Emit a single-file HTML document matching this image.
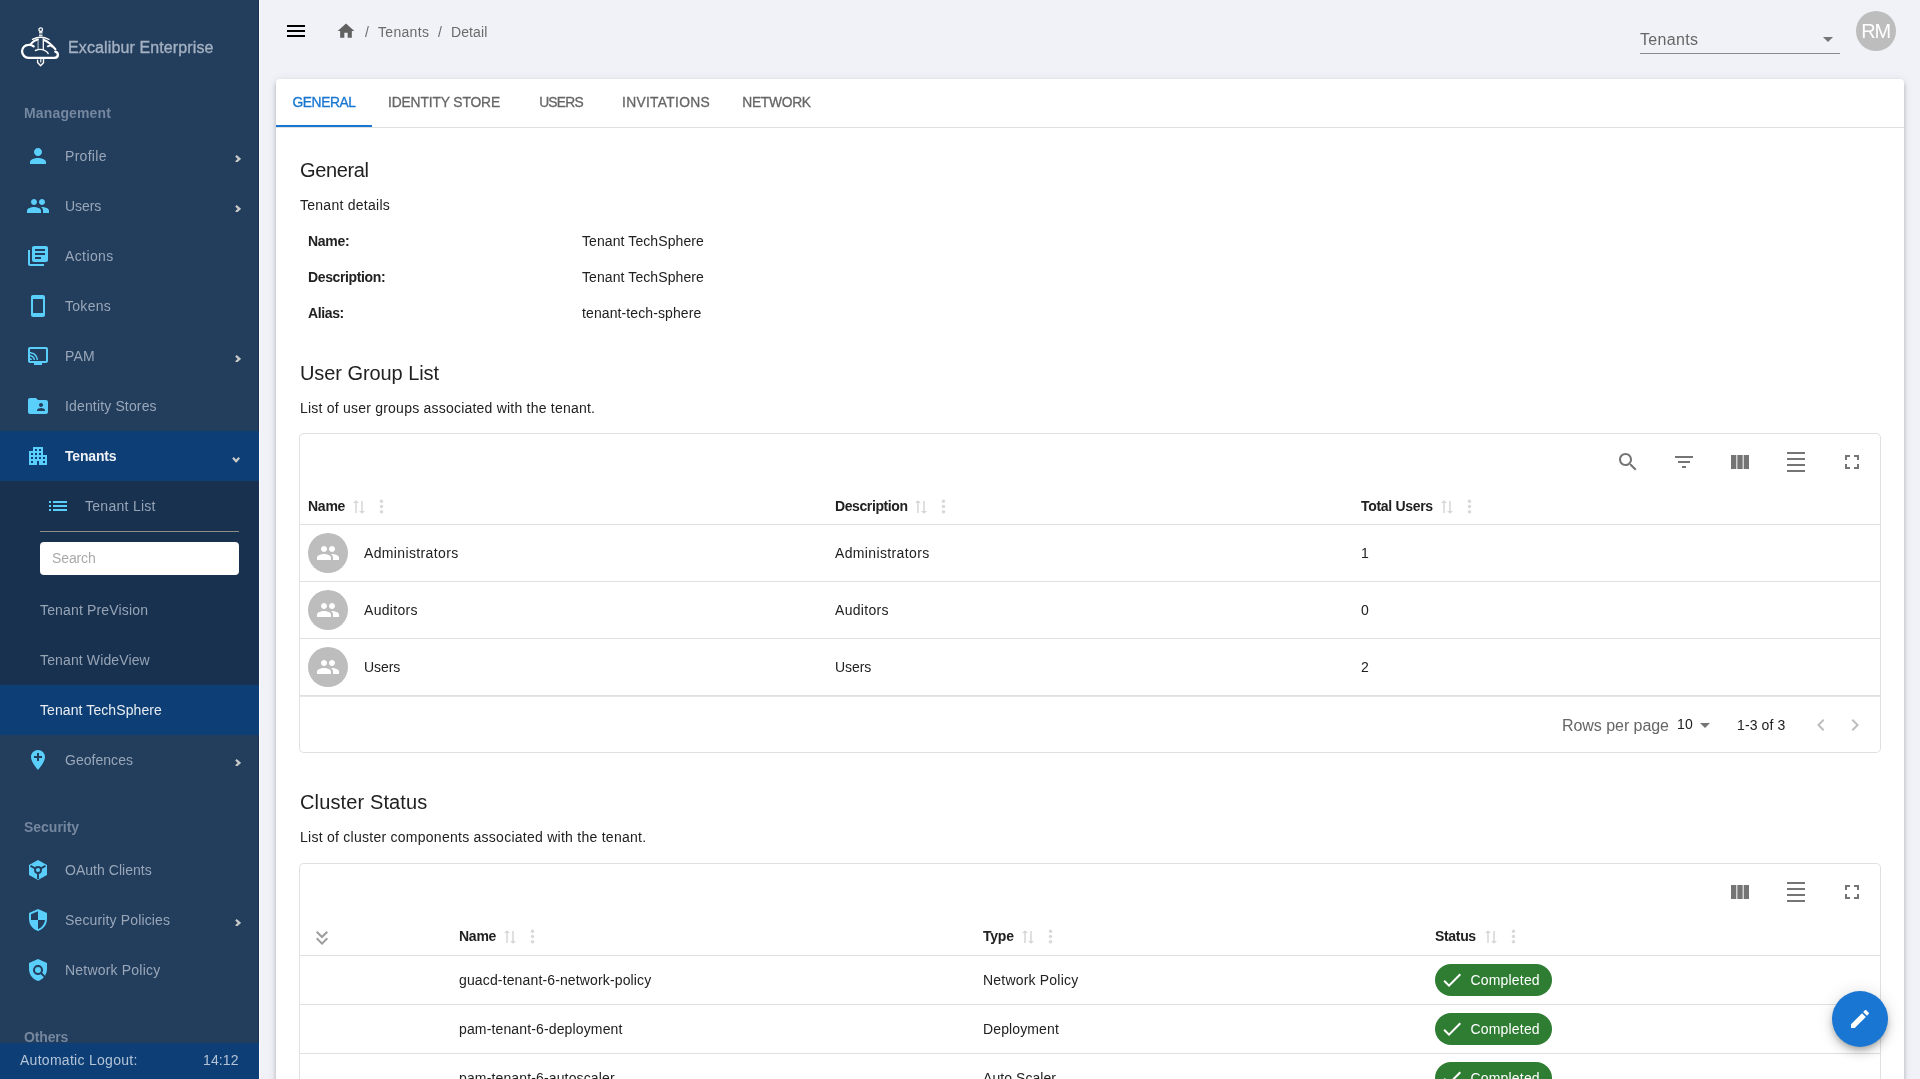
<!DOCTYPE html>
<html lang="en"><head>
<meta charset="utf-8">
<title>Excalibur Enterprise - Tenant Detail</title>
<style>
*{box-sizing:border-box;margin:0;padding:0}
html,body{width:1920px;height:1079px;overflow:hidden;background:#f1f2f7}
body{font-family:"Liberation Sans",sans-serif;font-size:14px;color:#212121;position:relative;will-change:transform}
.t{white-space:pre;display:inline-block}
svg{display:block;flex:none}
/* ---------- sidebar ---------- */
#side{position:absolute;left:0;top:0;width:259px;height:1079px;background:#233d5c;overflow:hidden;box-shadow:inset -1px 0 0 #1a3252,1px 0 0 rgba(255,255,255,.85)}
.brand{position:absolute;left:0;top:0;height:94px;width:259px}
.brand svg{position:absolute;left:20px;top:26px}
.brand .t{position:absolute;left:68px;top:36px;-webkit-text-stroke:.35px;font-size:16px;line-height:24px;font-weight:500;color:#a3b1c2;letter-spacing:.15px}
.sect{position:absolute;left:24px;height:20px;line-height:20px;font-size:14px;font-weight:700;color:#74879f;letter-spacing:.45px}
.mi{position:absolute;left:0;width:259px;height:50px;display:flex;align-items:center;color:#99a7b9}
.mi .ic{position:absolute;left:26px;top:13px;width:24px;height:24px;fill:#5acffb}
.mi .t{position:absolute;left:65px;top:15px;font-size:14px;line-height:20px;letter-spacing:.15px}
.mi .ch{position:absolute;left:234.6px;top:23.5px;width:6.2px;height:7.8px;fill:#c9c9c9}
.mi .ch.dn{left:232.9px;top:25.2px;transform:rotate(90deg)}
.mi.act{background:#0d3f76;color:#eef1f5}
.mi.act .t{font-weight:700}
#sub{position:absolute;left:0;top:481px;width:259px;height:254px;background:#18314f}
.si{position:absolute;left:0;width:259px;height:50px;color:#96a4b6}
.si .t{position:absolute;left:40px;top:15px;font-size:14px;line-height:20px;letter-spacing:.15px}
.si.act{background:#0d3f76;color:#e9edf2}
#foot{position:absolute;left:0;top:1043px;width:259px;height:36px;background:#0d3f76;color:#b4c3d6}
#foot .t{position:absolute;top:7px;font-size:14px;line-height:20px;letter-spacing:.15px}
/* ---------- top bar ---------- */
#burger{position:absolute;left:284px;top:19px;width:24px;height:24px;fill:#000}
#home{position:absolute;left:336px;top:21px;width:20px;height:20px;fill:#616161}
.bc{position:absolute;top:22px;font-size:14px;line-height:20px;color:#6b6b6b;letter-spacing:.15px}
#sel{position:absolute;left:1640px;top:24px;width:200px;height:30px;border-bottom:1px solid #8a8a8a}
#sel .t{position:absolute;left:0;top:4px;font-size:16px;line-height:24px;color:#666;letter-spacing:.15px}
#sel svg{position:absolute;left:176px;top:3px;width:24px;height:24px;fill:#757575}
#ava{position:absolute;left:1855.5px;top:11px;width:40px;height:40px;border-radius:50%;background:#bdbdbd;color:#fff;text-align:center}
#ava .t{font-size:20px;line-height:40px;letter-spacing:0}
/* ---------- card ---------- */
#card{position:absolute;left:276px;top:79px;width:1628px;height:1100px;background:#fff;border-radius:4px;box-shadow:0 2px 4px -1px rgba(0,0,0,.17),0 4px 5px 0 rgba(0,0,0,.12),0 1px 10px 0 rgba(0,0,0,.1)}
#tabs{position:absolute;left:0;top:0;width:1628px;height:49px;border-bottom:1px solid #e0e0e0}
.tab{position:absolute;top:0;height:48px;text-align:center;color:#666;font-weight:500}
.tab .t{font-size:14px;line-height:48px;letter-spacing:.4px;-webkit-text-stroke:.3px}
.tab.on{color:#1976d2;border-bottom:2px solid #1976d2}
.h6{position:absolute;left:24px;font-size:20px;line-height:32px;height:32px;letter-spacing:.15px;color:#212121}
.p{position:absolute;left:24px;font-size:14px;line-height:20px;height:20px;letter-spacing:.15px;color:#212121}
.kv{position:absolute;font-size:14px;line-height:20px;letter-spacing:.15px}
.kv.k{left:32px;font-weight:700}
.kv.v{left:306px}
/* ---------- tables ---------- */
.box{position:absolute;left:24px;width:1580px;background:#fff;border-radius:4px;box-shadow:0 0 0 1px #e0e0e0;overflow:hidden}
.tb{position:absolute;top:16px;width:24px;height:24px;fill:#757575}
.hl{position:absolute;left:0;width:1580px;height:1px;background:#e0e0e0}
.th{position:absolute;font-size:14px;line-height:20px;font-weight:700;letter-spacing:.1px;color:#212121}
.so{position:absolute;width:18px;height:18px;fill:#d6d6d6}
.mv{position:absolute;width:21px;height:21px;fill:#d9d9d9}
.td{position:absolute;font-size:14px;line-height:20px;letter-spacing:.15px;color:#212121}
.gav{position:absolute;left:8px;width:40px;height:40px;border-radius:50%;background:#bdbdbd}
.gav svg{position:absolute;left:8px;top:8px;width:24px;height:24px;fill:#fff}
.pg{position:absolute;font-size:14px;line-height:20px;letter-spacing:.15px;color:#212121}
.chip{position:absolute;left:1135px;width:117px;height:32px;border-radius:16px;background:#2e7d32;color:#fff}
.chip svg{position:absolute;left:5px;top:4px;width:24px;height:24px;fill:#fff}
.chip .t{position:absolute;left:35.5px;top:6px;font-size:14px;line-height:20px;letter-spacing:.15px}
#fab{position:absolute;left:1832px;top:991px;width:56px;height:56px;border-radius:50%;background:#1976d2;box-shadow:0 3px 5px -1px rgba(0,0,0,.2),0 6px 10px 0 rgba(0,0,0,.14),0 1px 18px 0 rgba(0,0,0,.12)}
#fab svg{position:absolute;left:16px;top:16px;width:24px;height:24px;fill:#fff}
.tab .t{font-size:13.8px}
</style>
</head>
<body>
<div id="side">
<div class="brand"><svg width="40" height="42" viewBox="0 0 40 42" fill="none" stroke="#fff" stroke-linecap="round" stroke-linejoin="round">
<circle cx="20.7" cy="3.7" r="1.8" stroke-width="1.3"></circle>
<path d="M19 6.4h3.5M19 8h3.5M19 9.6h3.5" stroke-width="1.1" stroke-linecap="butt" opacity=".85"></path>
<path d="M12.5 13.4Q20.7 9.1 29.1 13.5" stroke-width="1.35"></path>
<path d="M18.1 13v10.2" stroke-width="1.1" stroke="#b9c3cf"></path>
<path d="M23.3 13v10.4" stroke-width="1.3"></path>
<path d="M13.6 20.4C11.9 19 10 18.7 8.5 18.9A6.45 6.45 0 0 0 8.5 31.8L34.6 31.8A3.3 3.3 0 0 0 37.9 28.6C37.9 27.2 36.7 26 35.3 25.6" stroke-width="2.3"></path>
<path d="M10.9 17.8C12.6 15.6 15 14.1 17.7 13.5" stroke-width="2"></path>
<path d="M24 14.1C28 15.6 32 19.4 35.4 23.2" stroke-width="2.1"></path><path d="M27.8 20.3L30.6 19.4L32 20.6" stroke-width="1.9"></path>
<path d="M15.4 24.5Q20.2 22.4 24 24.2T28.2 27.5" stroke-width="1.4"></path>
<path d="M17.6 34.2V36.6L20.6 39.7L23.5 36.8V32.5" stroke-width="1.4"></path>
<path d="M20.8 32.6V36" stroke-width="1.1"></path>
</svg><span class="t" style="letter-spacing: 0.12px;">Excalibur Enterprise</span></div>
<span class="t sect" style="top: 103px; letter-spacing: 0.15px;">Management</span>
<div class="mi" style="top:131px"><svg class="ic" viewBox="0 0 24 24"><path d="M12 12c2.21 0 4-1.79 4-4s-1.79-4-4-4-4 1.79-4 4 1.79 4 4 4zm0 2c-2.67 0-8 1.34-8 4v2h16v-2c0-2.66-5.33-4-8-4z"></path></svg><span class="t" style="letter-spacing: 0.29px;">Profile</span><svg class="ch" viewBox="0 0 6.2 7.8"><path d="M0.2 1.5L1.7 0 6.1 3.9 1.7 7.8 0.2 6.3 2.6 3.9z"></path></svg></div>
<div class="mi" style="top:181px"><svg class="ic" viewBox="0 0 24 24"><path d="M16 11c1.66 0 2.99-1.34 2.99-3S17.66 5 16 5c-1.66 0-3 1.34-3 3s1.34 3 3 3zm-8 0c1.66 0 2.99-1.34 2.99-3S9.66 5 8 5C6.34 5 5 6.34 5 8s1.34 3 3 3zm0 2c-2.33 0-7 1.17-7 3.5V19h14v-2.5c0-2.33-4.67-3.5-7-3.5zm8 0c-.29 0-.62.02-.97.05 1.16.84 1.97 1.97 1.97 3.45V19h6v-2.5c0-2.33-4.67-3.5-7-3.5z"></path></svg><span class="t" style="letter-spacing: -0.06px;">Users</span><svg class="ch" viewBox="0 0 6.2 7.8"><path d="M0.2 1.5L1.7 0 6.1 3.9 1.7 7.8 0.2 6.3 2.6 3.9z"></path></svg></div>
<div class="mi" style="top:231px"><svg class="ic" viewBox="0 0 24 24"><path d="M4 6H2v14c0 1.1.9 2 2 2h14v-2H4V6zm16-4H8c-1.1 0-2 .9-2 2v12c0 1.1.9 2 2 2h12c1.1 0 2-.9 2-2V4c0-1.1-.9-2-2-2zm-1 9H9V9h10v2zm-4 4H9v-2h6v2zm4-8H9V5h10v2z"></path></svg><span class="t" style="letter-spacing: 0.39px;">Actions</span></div>
<div class="mi" style="top:281px"><svg class="ic" viewBox="0 0 24 24"><path d="M17 1.01L7 1c-1.1 0-1.99.9-1.99 2v18c0 1.1.89 2 1.99 2h10c1.1 0 2-.9 2-2V3c0-1.1-.9-1.99-2-1.99zM17 19H7V5h10v14z"></path></svg><span class="t" style="letter-spacing: 0.28px;">Tokens</span></div>
<div class="mi" style="top:331px"><svg class="ic" viewBox="0 0 24 24"><path d="M20 3H4c-1.1 0-2 .9-2 2v12c0 1.1.9 2 2 2h4v2h8v-2h4c1.1 0 1.99-.9 1.99-2L22 5c0-1.1-.9-2-2-2zm0 14H4V5h16v12zM4 14v2h2c0-1.11-.89-2-2-2zm0-3v1.43c1.97 0 3.57 1.6 3.57 3.57H9c0-2.76-2.24-5-5-5zm0-3v1.45c3.61 0 6.55 2.93 6.55 6.55H12c0-4.42-3.59-8-8-8z"></path></svg><span class="t" style="letter-spacing: 0.12px;">PAM</span><svg class="ch" viewBox="0 0 6.2 7.8"><path d="M0.2 1.5L1.7 0 6.1 3.9 1.7 7.8 0.2 6.3 2.6 3.9z"></path></svg></div>
<div class="mi" style="top:381px"><svg class="ic" viewBox="0 0 24 24"><path d="M20 6h-8l-2-2H4c-1.1 0-1.99.9-1.99 2L2 18c0 1.1.9 2 2 2h16c1.1 0 2-.9 2-2V8c0-1.1-.9-2-2-2zm-5 3c1.1 0 2 .9 2 2s-.9 2-2 2-2-.9-2-2 .9-2 2-2zm4 8h-8v-1c0-1.33 2.67-2 4-2s4 .67 4 2v1z"></path></svg><span class="t" style="letter-spacing: 0.15px;">Identity Stores</span></div>
<div class="mi act" style="top:431px"><svg class="ic" viewBox="0 0 24 24"><path d="M17 11V3H7v4H3v14h8v-4h2v4h8V11h-4zM7 19H5v-2h2v2zm0-4H5v-2h2v2zm0-4H5V9h2v2zm4 4H9v-2h2v2zm0-4H9V9h2v2zm0-4H9V5h2v2zm4 8h-2v-2h2v2zm0-4h-2V9h2v2zm0-4h-2V5h2v2zm4 12h-2v-2h2v2zm0-4h-2v-2h2v2z"></path></svg><span class="t" style="letter-spacing: -0.17px;">Tenants</span><svg class="ch dn" viewBox="0 0 6.2 7.8"><path d="M0.2 1.5L1.7 0 6.1 3.9 1.7 7.8 0.2 6.3 2.6 3.9z"></path></svg></div>
<div id="sub">
<div class="si" style="top:0"><svg style="position:absolute;left:46px;top:13px;width:24px;height:24px;fill:#5acffb" viewBox="0 0 24 24"><path d="M3 13h2v-2H3v2zm0 4h2v-2H3v2zm0-8h2V7H3v2zm4 4h14v-2H7v2zm0 4h14v-2H7v2zM7 7v2h14V7H7z"></path></svg><span class="t" style="left: 85px; letter-spacing: 0.28px;">Tenant List</span></div>
<div style="position:absolute;left:40px;top:50px;width:199px;height:1px;background:#8f8c89"></div>
<div style="position:absolute;left:40px;top:61px;width:199px;height:33px;background:#fff;border-radius:4px"><span class="t" style="position: absolute; left: 12px; top: 6px; font-size: 14px; line-height: 20px; color: rgb(169, 169, 169); letter-spacing: -0.12px;">Search</span></div>
<div class="si" style="top:104px"><span class="t" style="letter-spacing: 0.16px;">Tenant PreVision</span></div>
<div class="si" style="top:154px"><span class="t" style="letter-spacing: 0.13px;">Tenant WideView</span></div>
<div class="si act" style="top:204px"><span class="t" style="letter-spacing: 0.09px;">Tenant TechSphere</span></div>
</div>
<div class="mi" style="top:735px"><svg class="ic" viewBox="0 0 24 24"><path d="M12 2C8.14 2 5 5.14 5 9c0 5.25 7 13 7 13s7-7.75 7-13c0-3.86-3.14-7-7-7zm4 8h-3v3h-2v-3H8V8h3V5h2v3h3v2z"></path></svg><span class="t" style="letter-spacing: 0.03px;">Geofences</span><svg class="ch" viewBox="0 0 6.2 7.8"><path d="M0.2 1.5L1.7 0 6.1 3.9 1.7 7.8 0.2 6.3 2.6 3.9z"></path></svg></div>
<span class="t sect" style="top: 817px; letter-spacing: -0.02px;">Security</span>
<div class="mi" style="top:845px"><svg class="ic" viewBox="0 0 24 24"><path d="M12 2L3 7v10l9 5 9-5V7z"></path><g stroke="#233d5c" stroke-width="1.9" fill="none"><path d="M12 12L4.5 7.8M12 12l7.5-4.2M12 12v9"></path></g><circle cx="12" cy="12" r="3" fill="#5acffb" stroke="#233d5c" stroke-width="1.9"></circle></svg><span class="t" style="letter-spacing: 0.03px;">OAuth Clients</span></div>
<div class="mi" style="top:895px"><svg class="ic" viewBox="0 0 24 24"><path d="M12 1L3 5v6c0 5.55 3.84 10.74 9 12 5.16-1.26 9-6.45 9-12V5l-9-4zm0 10.99h7c-.53 4.12-3.28 7.79-7 8.94V12H5V6.3l7-3.11v8.8z"></path></svg><span class="t" style="letter-spacing: 0.14px;">Security Policies</span><svg class="ch" viewBox="0 0 6.2 7.8"><path d="M0.2 1.5L1.7 0 6.1 3.9 1.7 7.8 0.2 6.3 2.6 3.9z"></path></svg></div>
<div class="mi" style="top:945px"><svg class="ic" viewBox="0 0 24 24"><path d="M21 5l-9-4-9 4v6c0 5.55 3.84 10.74 9 12 2.3-.56 4.33-1.9 5.88-3.71l-3.12-3.12c-1.94 1.29-4.58 1.07-6.29-.64-1.95-1.95-1.95-5.12 0-7.07 1.95-1.95 5.12-1.95 7.07 0 1.71 1.71 1.92 4.35.64 6.29l2.9 2.9C20.29 15.69 21 13.38 21 11V5z"></path><circle cx="12" cy="12" r="3"></circle></svg><span class="t" style="letter-spacing: 0.2px;">Network Policy</span></div>
<span class="t sect" style="top: 1027px; letter-spacing: -0.15px;">Others</span>
<div id="foot"><span class="t" style="left: 20px; letter-spacing: 0.28px;">Automatic Logout:</span><span class="t" style="left: 203px; letter-spacing: 0.11px;">14:12</span></div>
</div>
<svg id="burger" viewBox="0 0 24 24"><path d="M3 18h18v-2H3v2zm0-5h18v-2H3v2zm0-7v2h18V6H3z"></path></svg><svg id="home" viewBox="0 0 24 24"><path d="M10 20v-6h4v6h5v-8h3L12 3 2 12h3v8z"></path></svg><span class="t bc" style="left:365px">/</span><span class="t bc" style="left: 378px; letter-spacing: 0.31px;">Tenants</span><span class="t bc" style="left:438px">/</span><span class="t bc" style="left: 451px; letter-spacing: 0.11px;">Detail</span>
<div id="sel"><span class="t" style="letter-spacing: 0.33px;">Tenants</span><svg viewBox="0 0 24 24"><path d="M7 10l5 5 5-5z"></path></svg></div>
<div id="ava"><span class="t" style="letter-spacing: -1.31px;">RM</span></div>
<div id="card">
<div id="tabs"><div class="tab on" style="left:0px;width:96px"><span class="t" style="letter-spacing: -0.43px;">GENERAL</span></div><div class="tab" style="left:96px;width:144px"><span class="t" style="letter-spacing: -0.12px;">IDENTITY STORE</span></div><div class="tab" style="left:240px;width:90px"><span class="t" style="letter-spacing: -0.78px;">USERS</span></div><div class="tab" style="left:330px;width:120px"><span class="t" style="letter-spacing: 0.3px;">INVITATIONS</span></div><div class="tab" style="left:450px;width:101px"><span class="t" style="letter-spacing: -0.31px;">NETWORK</span></div></div>
<span class="t h6" style="top: 75px; letter-spacing: -0.37px;">General</span>
<span class="t p" style="top: 116px; letter-spacing: 0.26px;">Tenant details</span>
<span class="t kv k" style="top: 152px; letter-spacing: -0.3px;">Name:</span><span class="t kv v" style="top: 152px; letter-spacing: 0.09px;">Tenant TechSphere</span>
<span class="t kv k" style="top: 188px; letter-spacing: -0.37px;">Description:</span><span class="t kv v" style="top: 188px; letter-spacing: 0.09px;">Tenant TechSphere</span>
<span class="t kv k" style="top: 224px; letter-spacing: -0.38px;">Alias:</span><span class="t kv v" style="top: 224px; letter-spacing: 0.1px;">tenant-tech-sphere</span>
<span class="t h6" style="top: 278px; letter-spacing: -0.07px;">User Group List</span>
<span class="t p" style="top: 319px; letter-spacing: 0.22px;">List of user groups associated with the tenant.</span>
<div class="box" style="top:355px;height:318px">
<svg class="tb" style="left:1316px" viewBox="0 0 24 24"><path d="M15.5 14h-.79l-.28-.27C15.41 12.59 16 11.11 16 9.5 16 5.91 13.09 3 9.5 3S3 5.91 3 9.5 5.91 16 9.5 16c1.61 0 3.09-.59 4.23-1.57l.27.28v.79l5 4.99L20.49 19l-4.99-5zm-6 0C7.01 14 5 11.99 5 9.5S7.01 5 9.5 5 14 7.01 14 9.5 11.99 14 9.5 14z"></path></svg><svg class="tb" style="left:1372px" viewBox="0 0 24 24"><path d="M10 18h4v-2h-4v2zM3 6v2h18V6H3zm3 7h12v-2H6v2z"></path></svg><svg class="tb" style="left:1428px" viewBox="0 0 24 24"><path d="M14.67 5v14H9.33V5h5.34zm1 14H21V5h-5.33v14zm-7.34 0V5H3v14h5.33z"></path></svg><svg class="tb" style="left:1484px" viewBox="0 0 24 24"><path d="M3 2h18v2H3zm0 18h18v2H3zm0-6h18v2H3zm0-6h18v2H3z"></path></svg><svg class="tb" style="left:1540px" viewBox="0 0 24 24"><path d="M7 14H5v5h5v-2H7v-3zm-2-4h2V7h3V5H5v5zm12 7h-3v2h5v-5h-2v3zM14 5v2h3v3h2V5h-5z"></path></svg>
<span class="t th" style="left: 8px; top: 62px; letter-spacing: -0.26px;">Name</span><svg class="so" style="left:50px;top:64px;transform:rotate(-90deg) scaleX(.9)" viewBox="0 0 24 24"><path d="M18 12l4-4-4-4v3H3v2h15zM6 12l-4 4 4 4v-3h15v-2H6z"></path></svg><svg class="mv" style="left:71px;top:62.4px" viewBox="0 0 24 24"><path d="M12 8c1.1 0 2-.9 2-2s-.9-2-2-2-2 .9-2 2 .9 2 2 2zm0 2c-1.1 0-2 .9-2 2s.9 2 2 2 2-.9 2-2-.9-2-2-2zm0 6c-1.1 0-2 .9-2 2s.9 2 2 2 2-.9 2-2-.9-2-2-2z"></path></svg>
<span class="t th" style="left: 535px; top: 62px; letter-spacing: -0.4px;">Description</span><svg class="so" style="left:612px;top:64px;transform:rotate(-90deg) scaleX(.9)" viewBox="0 0 24 24"><path d="M18 12l4-4-4-4v3H3v2h15zM6 12l-4 4 4 4v-3h15v-2H6z"></path></svg><svg class="mv" style="left:633px;top:62.4px" viewBox="0 0 24 24"><path d="M12 8c1.1 0 2-.9 2-2s-.9-2-2-2-2 .9-2 2 .9 2 2 2zm0 2c-1.1 0-2 .9-2 2s.9 2 2 2 2-.9 2-2-.9-2-2-2zm0 6c-1.1 0-2 .9-2 2s.9 2 2 2 2-.9 2-2-.9-2-2-2z"></path></svg>
<span class="t th" style="left: 1061px; top: 62px; letter-spacing: -0.31px;">Total Users</span><svg class="so" style="left:1138px;top:64px;transform:rotate(-90deg) scaleX(.9)" viewBox="0 0 24 24"><path d="M18 12l4-4-4-4v3H3v2h15zM6 12l-4 4 4 4v-3h15v-2H6z"></path></svg><svg class="mv" style="left:1159px;top:62.4px" viewBox="0 0 24 24"><path d="M12 8c1.1 0 2-.9 2-2s-.9-2-2-2-2 .9-2 2 .9 2 2 2zm0 2c-1.1 0-2 .9-2 2s.9 2 2 2 2-.9 2-2-.9-2-2-2zm0 6c-1.1 0-2 .9-2 2s.9 2 2 2 2-.9 2-2-.9-2-2-2z"></path></svg>
<div class="hl" style="top:90px"></div>
<div class="gav" style="top:99px"><svg viewBox="0 0 24 24"><path d="M16 11c1.66 0 2.99-1.34 2.99-3S17.66 5 16 5c-1.66 0-3 1.34-3 3s1.34 3 3 3zm-8 0c1.66 0 2.99-1.34 2.99-3S9.66 5 8 5C6.34 5 5 6.34 5 8s1.34 3 3 3zm0 2c-2.33 0-7 1.17-7 3.5V19h14v-2.5c0-2.33-4.67-3.5-7-3.5zm8 0c-.29 0-.62.02-.97.05 1.16.84 1.97 1.97 1.97 3.45V19h6v-2.5c0-2.33-4.67-3.5-7-3.5z"></path></svg></div><span class="t td" style="left: 64px; top: 109px; letter-spacing: 0.36px;">Administrators</span><span class="t td" style="left: 535px; top: 109px; letter-spacing: 0.36px;">Administrators</span><span class="t td" style="left:1061px;top:109px">1</span><div class="hl" style="top:147px"></div>
<div class="gav" style="top:156px"><svg viewBox="0 0 24 24"><path d="M16 11c1.66 0 2.99-1.34 2.99-3S17.66 5 16 5c-1.66 0-3 1.34-3 3s1.34 3 3 3zm-8 0c1.66 0 2.99-1.34 2.99-3S9.66 5 8 5C6.34 5 5 6.34 5 8s1.34 3 3 3zm0 2c-2.33 0-7 1.17-7 3.5V19h14v-2.5c0-2.33-4.67-3.5-7-3.5zm8 0c-.29 0-.62.02-.97.05 1.16.84 1.97 1.97 1.97 3.45V19h6v-2.5c0-2.33-4.67-3.5-7-3.5z"></path></svg></div><span class="t td" style="left: 64px; top: 166px; letter-spacing: 0.31px;">Auditors</span><span class="t td" style="left: 535px; top: 166px; letter-spacing: 0.31px;">Auditors</span><span class="t td" style="left:1061px;top:166px">0</span><div class="hl" style="top:204px"></div>
<div class="gav" style="top:213px"><svg viewBox="0 0 24 24"><path d="M16 11c1.66 0 2.99-1.34 2.99-3S17.66 5 16 5c-1.66 0-3 1.34-3 3s1.34 3 3 3zm-8 0c1.66 0 2.99-1.34 2.99-3S9.66 5 8 5C6.34 5 5 6.34 5 8s1.34 3 3 3zm0 2c-2.33 0-7 1.17-7 3.5V19h14v-2.5c0-2.33-4.67-3.5-7-3.5zm8 0c-.29 0-.62.02-.97.05 1.16.84 1.97 1.97 1.97 3.45V19h6v-2.5c0-2.33-4.67-3.5-7-3.5z"></path></svg></div><span class="t td" style="left: 64px; top: 223px; letter-spacing: -0.06px;">Users</span><span class="t td" style="left: 535px; top: 223px; letter-spacing: -0.06px;">Users</span><span class="t td" style="left:1061px;top:223px">2</span><div class="hl" style="top:261px"></div>
<div class="hl" style="top:262px;background:#e6e6e6"></div>
<span class="t pg" style="left: 1262px; top: 280px; font-size: 16px; line-height: 24px; color: rgb(102, 102, 102); letter-spacing: -0.05px;">Rows per page</span><span class="t pg" style="left: 1377px; top: 280px; letter-spacing: 0.32px;">10</span><svg style="position:absolute;left:1393px;top:279px;width:24px;height:24px;fill:#757575" viewBox="0 0 24 24"><path d="M7 10l5 5 5-5z"></path></svg><span class="t pg" style="left: 1437px; top: 281px; letter-spacing: 0.12px;">1-3 of 3</span><svg style="position:absolute;left:1509px;top:278.5px;width:24px;height:24px;fill:#bdbdbd" viewBox="0 0 24 24"><path d="M15.41 7.41L14 6l-6 6 6 6 1.41-1.41L10.83 12z"></path></svg><svg style="position:absolute;left:1542.5px;top:278.5px;width:24px;height:24px;fill:#bdbdbd" viewBox="0 0 24 24"><path d="M10 6L8.59 7.41 13.17 12l-4.58 4.59L10 18l6-6z"></path></svg></div>
<span class="t h6" style="top: 707px; letter-spacing: 0.13px;">Cluster Status</span>
<span class="t p" style="top: 748px; letter-spacing: 0.26px;">List of cluster components associated with the tenant.</span>
<div class="box" style="top:785px;height:400px">
<svg class="tb" style="left:1428px" viewBox="0 0 24 24"><path d="M14.67 5v14H9.33V5h5.34zm1 14H21V5h-5.33v14zm-7.34 0V5H3v14h5.33z"></path></svg><svg class="tb" style="left:1484px" viewBox="0 0 24 24"><path d="M3 2h18v2H3zm0 18h18v2H3zm0-6h18v2H3zm0-6h18v2H3z"></path></svg><svg class="tb" style="left:1540px" viewBox="0 0 24 24"><path d="M7 14H5v5h5v-2H7v-3zm-2-4h2V7h3V5H5v5zm12 7h-3v2h5v-5h-2v3zM14 5v2h3v3h2V5h-5z"></path></svg><svg style="position:absolute;left:10px;top:62px;width:24px;height:24px;fill:#9e9e9e" viewBox="0 0 24 24"><path d="M18 6.41L16.59 5 12 9.58 7.41 5 6 6.41l6 6z M18 13l-1.41-1.41L12 16.17l-4.59-4.58L6 13l6 6z"></path></svg><span class="t th" style="left: 159px; top: 62px; letter-spacing: -0.26px;">Name</span><svg class="so" style="left:201px;top:64px;transform:rotate(-90deg) scaleX(.9)" viewBox="0 0 24 24"><path d="M18 12l4-4-4-4v3H3v2h15zM6 12l-4 4 4 4v-3h15v-2H6z"></path></svg><svg class="mv" style="left:222px;top:62.4px" viewBox="0 0 24 24"><path d="M12 8c1.1 0 2-.9 2-2s-.9-2-2-2-2 .9-2 2 .9 2 2 2zm0 2c-1.1 0-2 .9-2 2s.9 2 2 2 2-.9 2-2-.9-2-2-2zm0 6c-1.1 0-2 .9-2 2s.9 2 2 2 2-.9 2-2-.9-2-2-2z"></path></svg>
<span class="t th" style="left: 683px; top: 62px; letter-spacing: -0.24px;">Type</span><svg class="so" style="left:719px;top:64px;transform:rotate(-90deg) scaleX(.9)" viewBox="0 0 24 24"><path d="M18 12l4-4-4-4v3H3v2h15zM6 12l-4 4 4 4v-3h15v-2H6z"></path></svg><svg class="mv" style="left:740px;top:62.4px" viewBox="0 0 24 24"><path d="M12 8c1.1 0 2-.9 2-2s-.9-2-2-2-2 .9-2 2 .9 2 2 2zm0 2c-1.1 0-2 .9-2 2s.9 2 2 2 2-.9 2-2-.9-2-2-2zm0 6c-1.1 0-2 .9-2 2s.9 2 2 2 2-.9 2-2-.9-2-2-2z"></path></svg>
<span class="t th" style="left: 1135px; top: 62px; letter-spacing: -0.33px;">Status</span><svg class="so" style="left:1182px;top:64px;transform:rotate(-90deg) scaleX(.9)" viewBox="0 0 24 24"><path d="M18 12l4-4-4-4v3H3v2h15zM6 12l-4 4 4 4v-3h15v-2H6z"></path></svg><svg class="mv" style="left:1203px;top:62.4px" viewBox="0 0 24 24"><path d="M12 8c1.1 0 2-.9 2-2s-.9-2-2-2-2 .9-2 2 .9 2 2 2zm0 2c-1.1 0-2 .9-2 2s.9 2 2 2 2-.9 2-2-.9-2-2-2zm0 6c-1.1 0-2 .9-2 2s.9 2 2 2 2-.9 2-2-.9-2-2-2z"></path></svg>
<div class="hl" style="top:91px"></div>
<span class="t td" style="left: 159px; top: 106px; letter-spacing: 0.14px;">guacd-tenant-6-network-policy</span><span class="t td" style="left: 683px; top: 106px; letter-spacing: 0.2px;">Network Policy</span><div class="chip" style="top:100px"><svg viewBox="0 0 24 24"><path d="M9 16.17L4.83 12l-1.42 1.41L9 19 21 7l-1.41-1.41z"></path></svg><span class="t" style="letter-spacing: 0.18px;">Completed</span></div><div class="hl" style="top:140px"></div>
<span class="t td" style="left: 159px; top: 155px; letter-spacing: 0.14px;">pam-tenant-6-deployment</span><span class="t td" style="left: 683px; top: 155px; letter-spacing: 0.12px;">Deployment</span><div class="chip" style="top:149px"><svg viewBox="0 0 24 24"><path d="M9 16.17L4.83 12l-1.42 1.41L9 19 21 7l-1.41-1.41z"></path></svg><span class="t" style="letter-spacing: 0.18px;">Completed</span></div><div class="hl" style="top:189px"></div>
<span class="t td" style="left: 159px; top: 204px; letter-spacing: 0.14px;">pam-tenant-6-autoscaler</span><span class="t td" style="left: 683px; top: 204px; letter-spacing: 0.06px;">Auto Scaler</span><div class="chip" style="top:198px"><svg viewBox="0 0 24 24"><path d="M9 16.17L4.83 12l-1.42 1.41L9 19 21 7l-1.41-1.41z"></path></svg><span class="t" style="letter-spacing: 0.18px;">Completed</span></div><div class="hl" style="top:238px"></div>
</div>
</div>
<div id="fab"><svg viewBox="0 0 24 24"><path d="M3 17.25V21h3.75L17.81 9.94l-3.75-3.75L3 17.25zM20.71 7.04c.39-.39.39-1.02 0-1.41l-2.34-2.34c-.39-.39-1.02-.39-1.41 0l-1.83 1.83 3.75 3.75 1.83-1.83z"></path></svg></div>


</body></html>
